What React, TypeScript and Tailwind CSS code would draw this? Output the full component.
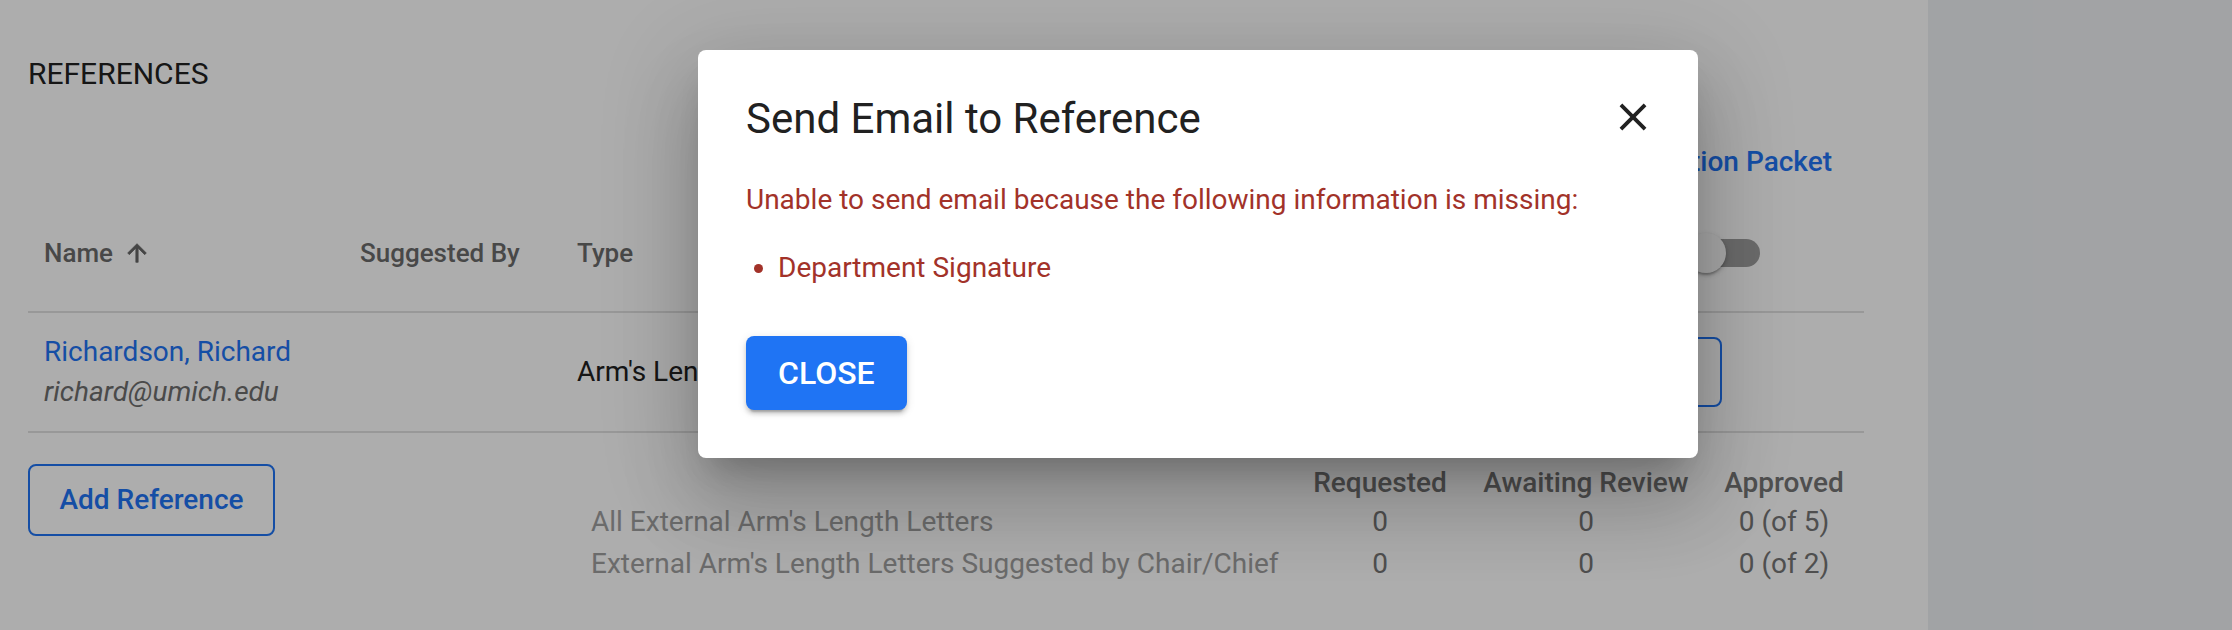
import React from "react";

function CloseIcon() {
  return (
    <svg width="46" height="46" viewBox="0 0 24 24" fill="#212121" aria-hidden="true">
      <path d="M19 6.41 17.59 5 12 10.59 6.41 5 5 6.41 10.59 12 5 17.59 6.41 19 12 13.41 17.59 19 19 17.59 13.41 12z" />
    </svg>
  );
}

function ArrowUp() {
  return (
    <svg width="28" height="28" viewBox="0 0 24 24" fill="#666666" aria-hidden="true">
      <path d="m4 12 1.41 1.41L11 7.83V20h2V7.83l5.58 5.59L20 12l-8-8-8 8z" stroke="#666666" strokeWidth="0.6" />
    </svg>
  );
}

export default function App() {
  return (
    <div className="relative flex h-[630px] w-[2232px] overflow-hidden font-['Roboto',sans-serif]">
      <main className="w-[1928px] shrink-0 bg-white pl-[28px] pr-[64px] pt-[59px]">
        <h2 className="text-[30px] leading-none text-[#212121]">REFERENCES</h2>
        <div className="mt-[59px] flex justify-end pr-[32px]">
          <a className="text-[28px] font-medium leading-none text-[#1f74f4]">Download Application Packet</a>
        </div>
        <div className="mt-[19px]">
          <div className="flex h-[118px] items-center border-b-2 border-[#e0e0e0] text-[26px] font-medium text-[#6b6b6b]">
            <div className="flex w-[316px] items-center gap-[10px] pl-[16px]">
              <span>Name</span>
              <ArrowUp />
            </div>
            <div className="w-[216px] pl-[16px]">Suggested By</div>
            <div className="flex-1 pl-[17px]">Type</div>
            <div className="flex w-[400px] justify-end pr-[104px]">
              <div className="relative h-[40px] w-[74px]">
                <div className="absolute left-[6px] top-[6px] h-[28px] w-[68px] rounded-full bg-[#9e9e9e]" />
                <div className="absolute left-0 top-0 h-[40px] w-[40px] rounded-full bg-[#fafafa] shadow-[0_4px_2px_-2px_rgba(0,0,0,0.2),0_2px_4px_0_rgba(0,0,0,0.14),0_2px_6px_0_rgba(0,0,0,0.12)]" />
              </div>
            </div>
          </div>
          <div className="flex h-[120px] items-center border-b-2 border-[#e0e0e0] text-[28px]">
            <div className="w-[532px] pl-[16px] leading-[40px]">
              <div className="text-[#1f74f4]">Richardson, Richard</div>
              <div className="italic text-[#6d6d6d]">richard@umich.edu</div>
            </div>
            <div className="flex-1 pl-[17px] text-[#212121]">Arm's Length</div>
            <div className="flex w-[400px] justify-end pr-[142px]">
              <button className="h-[70px] rounded-[8px] border-2 border-[#1f74f4] px-[32px] text-[28px] font-medium text-[#1f74f4]">
                Send Email
              </button>
            </div>
          </div>
          <div className="flex items-start justify-between">
            <button className="mt-[31px] h-[72px] w-[247px] rounded-[8px] border-2 border-[#1f74f4] text-[28px] font-medium text-[#1f74f4]">
              Add Reference
            </button>
            <div className="mt-[32px] grid grid-cols-[705px_168px_244px_152px] pr-[4px] text-[28px]">
              <div className="leading-[36px]" />
              <div className="text-center font-medium leading-[36px] text-[#757575]">Requested</div>
              <div className="text-center font-medium leading-[36px] text-[#757575]">Awaiting Review</div>
              <div className="text-center font-medium leading-[36px] text-[#757575]">Approved</div>
              <div className="leading-[42px] text-[#9e9e9e]">All External Arm's Length Letters</div>
              <div className="text-center leading-[42px] text-[#757575]">0</div>
              <div className="text-center leading-[42px] text-[#757575]">0</div>
              <div className="text-center leading-[42px] text-[#757575]">0 (of 5)</div>
              <div className="leading-[42px] text-[#9e9e9e]">External Arm's Length Letters Suggested by Chair/Chief</div>
              <div className="text-center leading-[42px] text-[#757575]">0</div>
              <div className="text-center leading-[42px] text-[#757575]">0</div>
              <div className="text-center leading-[42px] text-[#757575]">0 (of 2)</div>
            </div>
          </div>
        </div>
      </main>
      <aside className="flex-1 bg-[#eef0f3]" />

      <div className="absolute inset-0 bg-black/[0.32]">
        <div
          role="dialog"
          className="ml-[698px] mt-[50px] w-[1000px] rounded-[8px] bg-white pb-[48px] shadow-[0_22px_30px_-14px_rgba(0,0,0,0.2),0_48px_76px_6px_rgba(0,0,0,0.14),0_18px_92px_16px_rgba(0,0,0,0.12)]"
        >
          <div className="flex items-start justify-between pl-[48px] pr-[42px] pt-[44px]">
            <h2 className="mt-[4px] text-[42px] leading-none text-[#212121]">Send Email to Reference</h2>
            <button aria-label="close" className="h-[46px] w-[46px]">
              <CloseIcon />
            </button>
          </div>
          <div className="px-[48px] text-[28px] leading-none text-[#a23229]">
            <p className="mt-[46px]">Unable to send email because the following information is missing:</p>
            <ul className="mt-[40px] list-disc pl-[32px]">
              <li>Department Signature</li>
            </ul>
            <button className="mt-[54px] h-[74px] rounded-[8px] bg-[#1f74f4] px-[32px] text-[32px] font-medium uppercase leading-none text-white shadow-[0_6px_2px_-4px_rgba(0,0,0,0.2),0_4px_4px_0_rgba(0,0,0,0.14),0_2px_10px_0_rgba(0,0,0,0.12)]">
              Close
            </button>
          </div>
        </div>
      </div>
    </div>
  );
}
